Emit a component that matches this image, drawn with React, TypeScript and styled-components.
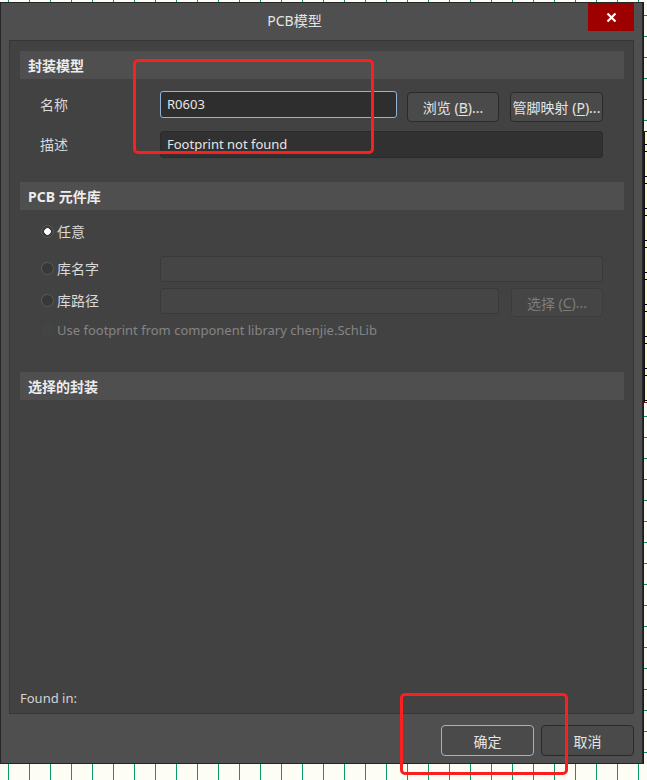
import styled, { createGlobalStyle } from 'styled-components'

const GlobalStyle = createGlobalStyle`
    html, body {
        margin: 0;
        padding: 0;
        background: #fdfdf6;
    }
    * {
        box-sizing: border-box;
    }
`;

const FONT = `"Noto Sans", "Noto Sans CJK SC", sans-serif`;

const Screen = styled.div`
    position: relative;
    width: 647px;
    height: 780px;
    display: flex;
    flex-direction: column;
    overflow: hidden;
    font-family: ${FONT};
    background: #fdfdf6;
`;

const SheetStrip = styled.div<{ $h: number }>`
    height: ${p => p.$h}px;
    flex: none;
    background: repeating-linear-gradient(90deg, transparent 0 8px, #0a9a6a 8px 9px, transparent 9px 21px), #fdfdf6;
`;

const Middle = styled.div`
    display: flex;
    flex: 1;
    min-height: 0;
`;

const RightStrip = styled.div`
    flex: 1;
    display: flex;
    flex-direction: column;
    border-left: 1px solid #1e1e1e;
`;

const StripPart = styled.div<{ $h?: number; $yellow?: boolean }>`
    height: ${p => (p.$h ? `${p.$h}px` : 'auto')};
    flex: ${p => (p.$h ? 'none' : '1')};
    background: ${p => p.$yellow
        ? 'linear-gradient(90deg, #111 0 1px, transparent 1px), repeating-linear-gradient(180deg, #ffffc8 0 12px, #111 12px 13px, #ffffc8 13px 19px, #111 19px 20px, #ffffc8 20px 32px)'
        : 'repeating-linear-gradient(180deg, transparent 0 13px, #0a9a6a 13px 14px, transparent 14px 21px), #fdfdf6'};
    border-bottom: ${p => (p.$yellow ? '1px solid #8a1010' : 'none')};
    border-top: ${p => (p.$yellow ? '1px solid #8a1010' : 'none')};
`;

const Dialog = styled.div`
    width: 643px;
    height: 762px;
    flex: none;
    display: flex;
    flex-direction: column;
    background: #4f4f4f;
    border: 1px solid #262626;
`;

const TitleBar = styled.div`
    display: flex;
    align-items: flex-start;
    height: 37px;
    flex: none;
`;

const Title = styled.div`
    flex: 1;
    text-align: center;
    line-height: 36px;
    font-size: 14px;
    color: #e4e4e4;
`;

const CloseButton = styled.div`
    width: 46px;
    height: 28px;
    margin-right: 8px;
    background: #9e0000;
    color: #ffffff;
    display: flex;
    align-items: center;
    justify-content: center;
`;

const Panel = styled.div`
    flex: 1;
    margin: 0 8px;
    display: flex;
    flex-direction: column;
    background: #424242;
    border: 1px solid #353535;
    padding: 10px 9px 0 10px;
`;

const SectionHeader = styled.div<{ $mt?: number }>`
    height: 28px;
    margin-top: ${p => p.$mt ?? 0}px;
    padding-left: 8px;
    display: flex;
    align-items: center;
    background: #4f4f4f;
    color: #ececec;
    font-size: 14px;
    font-weight: 700;
`;

const Row = styled.div<{ $mt: number; $h: number }>`
    display: flex;
    align-items: flex-start;
    height: ${p => p.$h}px;
    margin-top: ${p => p.$mt}px;
    padding: 0 21px 0 20px;
`;

const Label = styled.div<{ $h: number; $disabled?: boolean }>`
    width: 120px;
    flex: none;
    height: ${p => p.$h}px;
    padding-bottom: 2px;
    display: flex;
    align-items: center;
    gap: 3px;
    font-size: ${p => (p.$disabled ? '13px' : '14px')};
    color: ${p => (p.$disabled ? '#858585' : '#d9d9d9')};
    white-space: nowrap;
`;

const Radio = styled.span<{ $checked?: boolean; $disabled?: boolean }>`
    width: 13px;
    height: 13px;
    margin-left: 1px;
    border-radius: 50%;
    flex: none;
    border: 1px solid ${p => (p.$disabled ? '#454545' : '#5a5a5a')};
    background: ${p => p.$checked
        ? 'radial-gradient(circle, #ffffff 0 3px, #3c3c3c 3.6px)'
        : p.$disabled ? '#444444' : '#383838'};
`;

const Field = styled.div<{ $w?: number; $h: number; $tone: 'focus' | 'dark' | 'empty' }>`
    ${p => (p.$w ? `width: ${p.$w}px; flex: none;` : 'flex: 1;')}
    height: ${p => p.$h}px;
    padding: 0 0 1px 6px;
    display: flex;
    align-items: center;
    border-radius: 3px;
    font-size: 13px;
    color: #e6e6e6;
    background: ${p => (p.$tone === 'focus' ? '#2e2e2e' : p.$tone === 'dark' ? '#313131' : '#454545')};
    border: 1px solid ${p => (p.$tone === 'focus' ? '#93b3d3' : p.$tone === 'dark' ? '#2b2b2b' : '#3a3a3a')};
`;

const Button = styled.div<{ $w: number; $h: number; $ml: number; $mt?: number; $disabled?: boolean; $primary?: boolean }>`
    width: ${p => p.$w}px;
    height: ${p => p.$h}px;
    margin-left: ${p => p.$ml}px;
    margin-top: ${p => p.$mt ?? 0}px;
    flex: none;
    display: flex;
    align-items: center;
    justify-content: center;
    border-radius: 4px;
    font-size: 14px;
    color: ${p => (p.$disabled ? '#7c7c7c' : '#e4e4e4')};
    background: ${p => (p.$disabled ? '#454545' : '#4a4a4a')};
    border: 1px solid ${p => (p.$primary ? '#8fb6dc' : p.$disabled ? '#3c3c3c' : '#2a2a2a')};
`;

const Key = styled.span`
    text-decoration: underline;
    text-underline-offset: 2px;
`;

const FoundIn = styled.div`
    margin-top: auto;
    height: 18px;
    margin-bottom: 6px;
    font-size: 13px;
    color: #d4d4d4;
    display: flex;
    align-items: center;
`;

const Footer = styled.div`
    height: 49px;
    flex: none;
    display: flex;
    justify-content: flex-end;
    align-items: flex-start;
    padding: 11px 8px 0 0;
`;

const Mark = styled.div<{ $x: number; $y: number; $w: number; $h: number }>`
    position: absolute;
    left: ${p => p.$x}px;
    top: ${p => p.$y}px;
    width: ${p => p.$w}px;
    height: ${p => p.$h}px;
    border: 3px solid #fb1f1f;
    border-radius: 5px;
    pointer-events: none;
`;

const App = () => {
    return (
        <Screen>
            <GlobalStyle />
            <SheetStrip $h={2} />
            <Middle>
                <Dialog>
                    <TitleBar>
                        <Title>PCB模型</Title>
                        <CloseButton>
                            <svg width="11" height="11" viewBox="0 0 11 11">
                                <path d="M1.5 1.5 L9.5 9.5 M9.5 1.5 L1.5 9.5" stroke="#fff" strokeWidth="2.2" />
                            </svg>
                        </CloseButton>
                    </TitleBar>
                    <Panel>
                        <SectionHeader>封装模型</SectionHeader>
                        <Row $mt={12} $h={31}>
                            <Label $h={27}>名称</Label>
                            <Field $w={237} $h={27} $tone="focus">R0603</Field>
                            <Button $w={92} $h={30} $ml={10} $mt={1}>浏览 (<Key>B</Key>)...</Button>
                            <Button $w={93} $h={30} $ml={11} $mt={1}>管脚映射 (<Key>P</Key>)...</Button>
                        </Row>
                        <Row $mt={9} $h={27}>
                            <Label $h={27}>描述</Label>
                            <Field $h={27} $tone="dark">Footprint not found</Field>
                        </Row>
                        <SectionHeader $mt={24}>PCB 元件库</SectionHeader>
                        <Row $mt={12} $h={20}>
                            <Label $h={20}><Radio $checked />任意</Label>
                        </Row>
                        <Row $mt={14} $h={26}>
                            <Label $h={26}><Radio />库名字</Label>
                            <Field $h={26} $tone="empty" />
                        </Row>
                        <Row $mt={6} $h={29}>
                            <Label $h={26}><Radio />库路径</Label>
                            <Field $w={339} $h={26} $tone="empty" />
                            <Button $w={92} $h={29} $ml={12} $disabled>选择 (<Key>C</Key>)...</Button>
                        </Row>
                        <Row $mt={4} $h={20}>
                            <Label $h={20} $disabled><Radio $disabled />Use footprint from component library chenjie.SchLib</Label>
                        </Row>
                        <SectionHeader $mt={31}>选择的封装</SectionHeader>
                        <FoundIn>Found in:</FoundIn>
                    </Panel>
                    <Footer>
                        <Button $w={93} $h={31} $ml={0} $primary>确定</Button>
                        <Button $w={93} $h={31} $ml={7}>取消</Button>
                    </Footer>
                </Dialog>
                <RightStrip>
                    <StripPart $h={129} />
                    <StripPart $h={272} $yellow />
                    <StripPart />
                </RightStrip>
            </Middle>
            <SheetStrip $h={16} />
            <Mark $x={133} $y={59} $w={241} $h={95} />
            <Mark $x={400} $y={693} $w={168} $h={82} />
        </Screen>
    )
}

export default App
